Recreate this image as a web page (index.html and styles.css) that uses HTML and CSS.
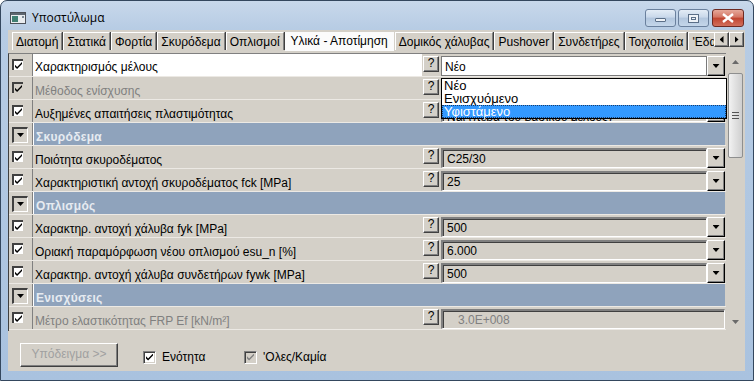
FILE: index.html
```html
<!DOCTYPE html>
<html lang="el">
<head>
    <meta charset="UTF-8">
    <title>Υποστύλωμα</title>
    <link rel="stylesheet" href="styles.css">
</head>
<body>
    <div class="window">
        <div class="titlebar">
            <svg class="app-icon" width="16" height="12" viewBox="0 0 16 12">
                <rect x="0.5" y="0.5" width="15" height="11" fill="#e9ecef" stroke="#4b5058"/>
                <rect x="1" y="1" width="14" height="2" fill="#5d6670"/>
                <rect x="2" y="4" width="6" height="6" fill="#3f7f72"/>
                <rect x="12" y="4" width="2" height="2" fill="#7c8a96"/>
            </svg>
            <span class="title">Υποστύλωμα</span>
            <div class="caption-btns">
                <span class="cap"><span class="glyph-min"></span></span>
                <span class="cap"><span class="glyph-max"></span></span>
                <span class="cap close">
                    <svg width="12" height="10" viewBox="0 0 12 10">
                        <path d="M1 1L11 9M11 1L1 9" stroke="#fff" stroke-width="2.4"/>
                    </svg>
                </span>
            </div>
        </div>

        <div class="client">
            <div class="tabbar">
                <div class="tabs">
                    <span class="tab">Διατομή</span>
                    <span class="tab">Στατικά</span>
                    <span class="tab">Φορτία</span>
                    <span class="tab">Σκυρόδεμα</span>
                    <span class="tab">Οπλισμοί</span>
                    <span class="tab active">Υλικά - Αποτίμηση</span>
                    <span class="tab">Δομικός χάλυβας</span>
                    <span class="tab">Pushover</span>
                    <span class="tab">Συνδετήρες</span>
                    <span class="tab">Τοιχοποιία</span>
                    <span class="tab">'Εδαφος</span>
                </div>
                <span class="tab-arrow left"></span>
                <span class="tab-arrow right"></span>
            </div>

            <div class="panel">
                <div class="grid">
                    <div class="row">
                        <span class="chk-cell"><span class="chk"></span></span>
                        <span class="label selected">Χαρακτηρισμός μέλους</span>
                        <span class="help">?</span>
                        <span class="combo open">
                            <span class="field">Νέο</span>
                            <span class="drop"></span>
                            <span class="listbox">
                                <span class="option">Νέο</span>
                                <span class="option">Ενισχυόμενο</span>
                                <span class="option hilite">Υφιστάμενο</span>
                            </span>
                        </span>
                    </div>
                    <div class="row">
                        <span class="chk-cell"><span class="chk off"></span></span>
                        <span class="label disabled">Μέθοδος ενίσχυσης</span>
                        <span class="help">?</span>
                        <span class="combo"><span class="field"></span><span class="drop"></span></span>
                    </div>
                    <div class="row">
                        <span class="chk-cell"><span class="chk"></span></span>
                        <span class="label">Αυξημένες απαιτήσεις πλαστιμότητας</span>
                        <span class="help">?</span>
                        <span class="combo"><span class="field low">Ναι (πέρα του βασικού μέλους)</span><span class="drop"></span></span>
                    </div>
                    <div class="row section">
                        <span class="chk-cell"><span class="expander"></span></span>
                        <span class="label">Σκυρόδεμα</span>
                    </div>
                    <div class="row">
                        <span class="chk-cell"><span class="chk"></span></span>
                        <span class="label">Ποιότητα σκυροδέματος</span>
                        <span class="help">?</span>
                        <span class="combo"><span class="field">C25/30</span><span class="drop"></span></span>
                    </div>
                    <div class="row">
                        <span class="chk-cell"><span class="chk"></span></span>
                        <span class="label">Χαρακτηριστική αντοχή σκυροδέματος fck [MPa]</span>
                        <span class="help">?</span>
                        <span class="combo"><span class="field">25</span><span class="drop"></span></span>
                    </div>
                    <div class="row section">
                        <span class="chk-cell"><span class="expander"></span></span>
                        <span class="label">Οπλισμός</span>
                    </div>
                    <div class="row">
                        <span class="chk-cell"><span class="chk"></span></span>
                        <span class="label">Χαρακτηρ. αντοχή χάλυβα fyk [MPa]</span>
                        <span class="help">?</span>
                        <span class="combo"><span class="field">500</span><span class="drop"></span></span>
                    </div>
                    <div class="row">
                        <span class="chk-cell"><span class="chk"></span></span>
                        <span class="label">Οριακή παραμόρφωση νέου οπλισμού esu_n [%]</span>
                        <span class="help">?</span>
                        <span class="combo"><span class="field">6.000</span><span class="drop"></span></span>
                    </div>
                    <div class="row">
                        <span class="chk-cell"><span class="chk"></span></span>
                        <span class="label">Χαρακτηρ. αντοχή χάλυβα συνδετήρων fywk [MPa]</span>
                        <span class="help">?</span>
                        <span class="combo"><span class="field">500</span><span class="drop"></span></span>
                    </div>
                    <div class="row section">
                        <span class="chk-cell"><span class="expander"></span></span>
                        <span class="label">Ενισχύσεις</span>
                    </div>
                    <div class="row">
                        <span class="chk-cell"><span class="chk"></span></span>
                        <span class="label disabled">Μέτρο ελαστικότητας FRP Ef [kN/m²]</span>
                        <span class="help">?</span>
                        <span class="combo"><span class="field readonly">3.0E+008</span></span>
                    </div>
                </div>

                <div class="scrollbar">
                    <span class="sb-arrow up"></span>
                    <span class="sb-thumb"><span class="grip"></span></span>
                    <span class="sb-space"></span>
                    <span class="sb-arrow down"></span>
                </div>
            </div>

            <div class="footer">
                <span class="button disabled">Υπόδειγμα &gt;&gt;</span>
                <label class="check-label first"><span class="box"></span>Ενότητα</label>
                <label class="check-label"><span class="box off"></span>'Ολες/Καμία</label>
            </div>
        </div>
    </div>
</body>
</html>
```

FILE: styles.css
```css
* {
    margin: 0;
    padding: 0;
    box-sizing: border-box;
}

body {
    font-family: "Liberation Sans", Arial, sans-serif;
    font-size: 12px;
    color: #000;
    background: #fff;
}

/* window frame */

.window {
    width: 754px;
    height: 381px;
    border: 1px solid #34475e;
    border-radius: 7px 7px 0 0;
    background: linear-gradient(to bottom, #c8d8eb 0, #b7cce4 28px, #a9c2df 100%);
    padding: 0 8px 9px 7px;
    display: flex;
    flex-direction: column;
}

.titlebar {
    height: 29px;
    display: flex;
    align-items: flex-start;
}

.app-icon {
    margin: 11px 0 0 2px;
}

.title {
    font-family: "Open Sans", "Noto Sans", sans-serif;
    font-size: 12px;
    margin: 8px 0 0 6px;
    color: #000;
}

.caption-btns {
    margin-left: auto;
    margin-top: 8px;
    margin-right: 1px;
    display: flex;
    gap: 2px;
}

.cap {
    width: 31px;
    height: 18px;
    border: 1px solid #6a809d;
    border-radius: 3px;
    background: linear-gradient(to bottom, #e3ecf6 0, #c9d8ea 45%, #b2c6de 50%, #c4d6ea 100%);
    display: flex;
    align-items: center;
    justify-content: center;
}

.cap.close {
    width: 32px;
    margin-left: 1px;
    border-color: #6e2a22;
    background: linear-gradient(to bottom, #e6a899 0, #d47563 45%, #c0442f 50%, #d2705c 100%);
}

.glyph-min {
    width: 11px;
    height: 4px;
    margin-top: 4px;
    background: #eef2f7;
    border: 1px solid #5b6f88;
    border-radius: 1px;
}

.glyph-max {
    width: 11px;
    height: 9px;
    border: 1px solid #5b6f88;
    background: #eef2f7;
    box-shadow: inset 0 0 0 2px #eef2f7, inset 0 0 0 3px #5b6f88;
}

/* client area */

.client {
    flex: 1;
    background: #d4d0c8;
    display: flex;
    flex-direction: column;
}

.tabbar {
    height: 23px;
    display: flex;
    align-items: flex-start;
    padding: 2px 0 0 4px;
}

.tabs {
    width: 702px;
    display: flex;
    overflow: hidden;
    height: 21px;
}

.tab {
    flex: none;
    height: 18px;
    line-height: 18px;
    padding: 0 3px;
    border-left: 1px solid #fff;
    border-top: 1px solid #fff;
    border-right: 1px solid #808080;
    box-shadow: 1px 0 0 #404040;
    margin-right: 1px;
    white-space: nowrap;
}

.tab.active {
    background: #fbfbfb;
    height: 20px;
    margin-top: -1px;
    padding: 0 5px;
    border-color: #fbfbfb;
    box-shadow: none;
}

.tab-arrow {
    width: 15px;
    height: 15px;
    background: #d4d0c8;
    border: 1px solid;
    border-color: #fff #404040 #404040 #fff;
    box-shadow: inset -1px -1px 0 #808080;
    display: flex;
    align-items: center;
    justify-content: center;
}

.tab-arrow::after {
    content: "";
    width: 4px;
    height: 7px;
    background: #000;
}

.tab-arrow.left::after {
    clip-path: polygon(100% 0, 100% 100%, 0 50%);
}

.tab-arrow.right::after {
    clip-path: polygon(0 0, 0 100%, 100% 50%);
}

/* property grid */

.panel {
    display: flex;
    height: 278px;
}

.grid {
    width: 718px;
    border-top: 1px solid #808080;
    border-left: 1px solid #404040;
}

.row {
    display: flex;
    height: 23px;
    border-bottom: 1px solid #ece9e4;
    padding-right: 1px;
}

.chk-cell {
    width: 24px;
    flex: none;
    border-right: 1px solid #808080;
    padding: 5px 0 0 3px;
}

.chk {
    display: block;
    width: 11px;
    height: 11px;
    background: #fff;
    border-top: 2px solid #404040;
    border-left: 2px solid #404040;
    position: relative;
}

.chk::after {
    content: "";
    position: absolute;
    left: 1px;
    top: 1px;
    width: 7px;
    height: 7px;
    background: #000;
    clip-path: polygon(0 40%, 30% 70%, 100% 0, 100% 30%, 30% 100%, 0 70%);
}

.chk.off {
    background: #d4d0c8;
}

.label {
    flex: 1;
    padding: 6px 0 0 2px;
    line-height: 16px;
    white-space: nowrap;
    overflow: hidden;
}

.label.selected {
    background: #fff;
    padding-top: 5px;
}

.label.disabled {
    color: #808080;
}

.help {
    width: 16px;
    height: 16px;
    flex: none;
    margin: 2px 2px 0 1px;
    border: 1px solid;
    border-color: #fff #404040 #404040 #fff;
    box-shadow: inset -1px -1px 0 #808080;
    text-align: center;
    line-height: 13px;
    font-size: 12px;
}

.combo {
    width: 284px;
    height: 20px;
    flex: none;
    margin-top: 2px;
    display: flex;
    position: relative;
}

.field {
    flex: 1;
    border-top: 2px solid #808080;
    border-left: 2px solid #808080;
    border-bottom: 1px solid #fff;
    border-right: 1px solid #fff;
    box-shadow: inset 1px 1px 0 #404040;
    padding: 2px 0 0 4px;
    line-height: 14px;
    white-space: nowrap;
    overflow: hidden;
}

.field.low {
    padding-top: 6px;
}

.field.readonly {
    color: #808080;
    padding-left: 15px;
}

.combo.open .field {
    background: #fff;
    border: 1px solid #7a7a7a;
    box-shadow: none;
    padding: 3px 0 0 3px;
}

.drop {
    width: 18px;
    flex: none;
    border: 1px solid;
    border-color: #fff #000 #000 #fff;
    box-shadow: inset -1px -1px 0 #808080;
    display: flex;
    align-items: center;
    justify-content: center;
}

.drop::after {
    content: "";
    width: 7px;
    height: 4px;
    background: #000;
    clip-path: polygon(0 0, 100% 0, 50% 100%);
}

.listbox {
    position: absolute;
    left: 0;
    top: 22px;
    width: 286px;
    border: 1px solid #000;
    background: #fff;
    z-index: 2;
    display: flex;
    flex-direction: column;
}

.option {
    height: 13px;
    line-height: 13px;
    padding-left: 2px;
    font-size: 13px;
}

.option.hilite {
    background: #3399ff;
    color: #fff;
    outline: 1px dotted #1a3d6a;
    outline-offset: -1px;
}

.row.section .chk-cell {
    padding: 4px 0 0 3px;
}

.expander {
    display: flex;
    justify-content: center;
    width: 16px;
    height: 16px;
    border-top: 2px solid #404040;
    border-left: 2px solid #404040;
    border-right: 1px solid #fff;
    border-bottom: 1px solid #fff;
    padding-top: 4px;
}

.expander::after {
    content: "";
    width: 7px;
    height: 4px;
    background: #000;
    clip-path: polygon(0 0, 100% 0, 50% 100%);
}

.row.section .label {
    background: #8fa3bc;
    color: #e6ebf1;
    font-weight: bold;
    border-left: 1px solid #fff;
    letter-spacing: 0.3px;
}

/* scrollbar */

.scrollbar {
    width: 15px;
    margin-left: 2px;
    display: flex;
    flex-direction: column;
}

.sb-arrow {
    height: 18px;
    display: flex;
    align-items: center;
    justify-content: center;
}

.sb-arrow::after {
    content: "";
    width: 7px;
    height: 4px;
    background: #6a6a6a;
}

.sb-arrow.up::after {
    clip-path: polygon(50% 0, 100% 100%, 0 100%);
}

.sb-arrow.down::after {
    clip-path: polygon(0 0, 100% 0, 50% 100%);
}

.sb-thumb {
    height: 85px;
    margin-top: 2px;
    border: 1px solid #8e8f8f;
    border-radius: 2px;
    background: linear-gradient(to right, #f2f2f2, #e0e0e0 50%, #cfcfcf);
    display: flex;
    align-items: center;
    justify-content: center;
}

.grip {
    width: 7px;
    height: 7px;
    border-top: 1px solid #555;
    border-bottom: 1px solid #555;
    background: linear-gradient(to bottom, transparent 2px, #555 2px, #555 3px, transparent 3px);
}

.sb-space {
    flex: 1;
}

/* footer */

.footer {
    flex: 1;
    display: flex;
    align-items: flex-start;
    padding: 12px 0 0 12px;
}

.button {
    width: 98px;
    height: 24px;
    border: 1px solid;
    border-color: #fff #404040 #404040 #fff;
    box-shadow: inset -1px -1px 0 #808080;
    text-align: center;
    line-height: 21px;
}

.button.disabled {
    color: #a0a0a0;
}

.check-label {
    display: flex;
    align-items: center;
    gap: 6px;
    margin-top: 7px;
    width: 101px;
}

.check-label.first {
    margin-left: 25px;
}

.box {
    width: 13px;
    height: 13px;
    background: #fff;
    border: 1px solid;
    border-color: #808080 #fff #fff #808080;
    box-shadow: inset 1px 1px 0 #404040, inset -1px -1px 0 #d4d0c8;
    position: relative;
}

.box::after {
    content: "";
    position: absolute;
    left: 2px;
    top: 2px;
    width: 7px;
    height: 7px;
    background: #000;
    clip-path: polygon(0 40%, 30% 70%, 100% 0, 100% 30%, 30% 100%, 0 70%);
}

.box.off {
    background: #d4d0c8;
}

.box.off::after {
    background: #808080;
}
```
